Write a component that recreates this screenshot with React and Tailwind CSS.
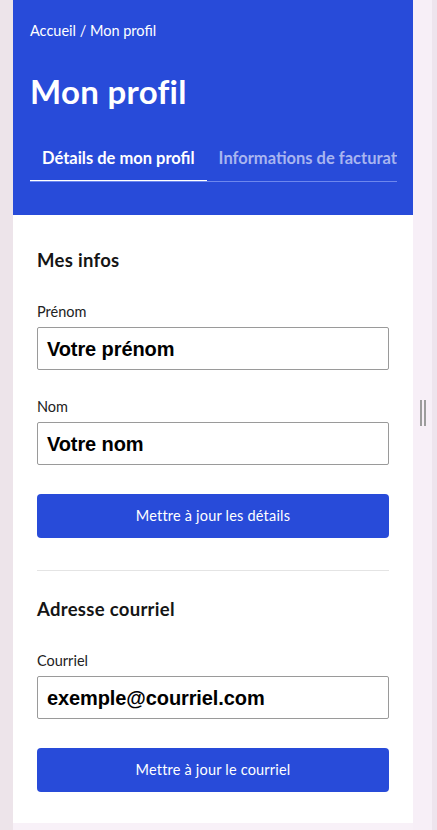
import React from 'react';

const Field = ({ label, value, gap = '' }) => (
  <div className={gap}>
    <label className="block text-[14.5px] leading-5 text-[#222]">{label}</label>
    <div className="mt-[5px] h-[43px] w-full border border-[#9a9a9a] rounded-[2px] flex items-center px-[9px]">
      <span className="font-['Liberation_Sans',Arial,sans-serif] font-bold text-[20px] text-black tracking-[-0.1px]">
        {value}
      </span>
    </div>
  </div>
);

const App = () => {
  return (
    <div className="h-[830px] w-[437px] flex overflow-hidden bg-[#ede4ea] font-['Lato',sans-serif]">
      {/* left gutter */}
      <div className="w-[13px] shrink-0"></div>

      {/* main column */}
      <div className="w-[400px] shrink-0 bg-[#f8f1f8] flex flex-col">
        {/* Header */}
        <div className="bg-[#284bd9] text-white pl-[17px] pr-4 pt-[21px] h-[215px] shrink-0">
          <p className="text-[14.5px] leading-5">Accueil / Mon profil</p>
          <h1 className="mt-[30px] text-[33px] font-bold leading-10 tracking-[0.3px]">Mon profil</h1>
          <div className="mt-[36px] flex overflow-hidden whitespace-nowrap border-b border-[#6d87ee]">
            <div className="px-3 pb-[11px] border-b-2 border-white -mb-px text-[16.5px] leading-[22px] font-bold">
              Détails de mon profil
            </div>
            <div className="px-3 pb-[11px] text-[16.5px] leading-[22px] font-bold text-[#a8b5f0]">
              Informations de facturation
            </div>
          </div>
        </div>

        {/* Card */}
        <div className="bg-white h-[608px] px-6 pt-[33px] overflow-hidden shrink-0">
          <h2 className="text-[18.5px] font-bold leading-6 text-[#151515] tracking-[0.3px]">Mes infos</h2>
          <div className="mt-[30px] flex flex-col gap-[27px]">
            <Field label="Prénom" value="Votre prénom" />
            <Field label="Nom" value="Votre nom" />
          </div>
          <button className="mt-[29px] w-full h-[44px] bg-[#284bd9] rounded-[4px] text-white text-[14.5px] tracking-[0.2px]">
            Mettre à jour les détails
          </button>
          <div className="mt-[32px] h-px bg-[#e4e4e4]"></div>

          <h2 className="mt-[26px] text-[18.5px] font-bold leading-6 text-[#151515] tracking-[0.3px]">Adresse courriel</h2>
          <div className="mt-[30px]">
            <Field label="Courriel" value="exemple@courriel.com" />
          </div>
          <button className="mt-[29px] w-full h-[44px] bg-[#284bd9] rounded-[4px] text-white text-[14.5px] tracking-[0.2px]">
            Mettre à jour le courriel
          </button>
          <div className="mt-[31px] h-px bg-[#e4e4e4]"></div>
        </div>
      </div>

      {/* resize strip */}
      <div className="w-[19px] shrink-0 bg-[#f7eff7] flex items-center justify-center">
        <div className="flex gap-[2px] -mt-[4px]">
          <div className="w-[2px] h-[26px] bg-[#9c9c9c]"></div>
          <div className="w-[2px] h-[26px] bg-[#9c9c9c]"></div>
        </div>
      </div>
      <div className="flex-1 bg-[#eee4ed]"></div>
    </div>
  );
};

export default App;
